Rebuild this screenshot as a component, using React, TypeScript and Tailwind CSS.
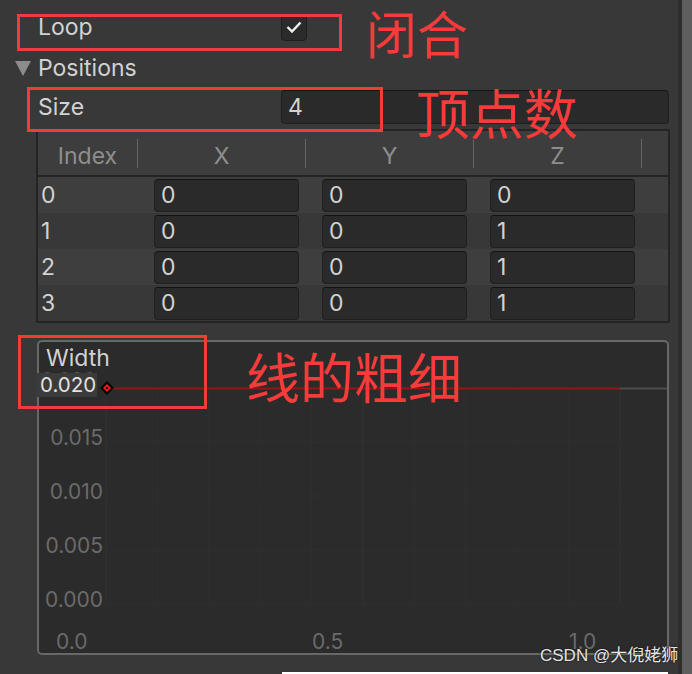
import React from 'react';

const rows = [
    ['0', '0', '0'],
    ['0', '0', '1'],
    ['0', '0', '1'],
    ['0', '0', '1'],
];

const yLabels = [
    { text: '0.015', top: 80 },
    { text: '0.010', top: 134 },
    { text: '0.005', top: 188 },
    { text: '0.000', top: 242 },
];

const xLabels = [
    { text: '0.0', left: 17 },
    { text: '0.5', left: 273 },
    { text: '1.0', left: 530 },
];

function NumberField({ value, className }: { value: string; className?: string }) {
    return (
        <div className={`h-[33px] bg-[#2a2a2a] border border-[#1f1f1f] border-t-[#141414] rounded-[4px] flex items-center pl-[6px] text-[23px] text-[#d2d2d2] ${className ?? ''}`}>
            {value}
        </div>
    );
}

function CurveGrid() {
    const minorX = Array.from({ length: 11 }, (_, i) => 67 + i * 51.4);
    const minorY = [46, 100, 154, 208, 262];
    return (
        <svg className="absolute left-0 top-0" width="628" height="311">
            {minorX.map((x, i) => (
                <line key={'v' + i} x1={x} y1={46} x2={x} y2={262} stroke={i % 5 === 0 ? '#333333' : '#2f2f2f'} strokeWidth="1" />
            ))}
            {minorY.map((y, i) => (
                <line key={'h' + i} x1={67} y1={y} x2={581} y2={y} stroke="#313131" strokeWidth="1" />
            ))}
            <line x1={581} y1={46.5} x2={628} y2={46.5} stroke="#4d4d4d" strokeWidth="2" />
            <line x1={70} y1={46.5} x2={581} y2={46.5} stroke="#9a1414" strokeWidth="2" />
            {/* keyframe */}
            <polygon points="68,39 75,46 68,53 61,46" fill="#050505" />
            <polygon points="68,42 72,46 68,50 64,46" fill="#ff1a1a" />
            <circle cx="68" cy="46" r="1.3" fill="#1a0000" />
        </svg>
    );
}

export default function App() {
    return (
        <div className="relative w-[692px] h-[674px] overflow-hidden bg-[#383838] flex" style={{ fontFamily: 'Inter, "Noto Sans", "Noto Sans CJK SC", sans-serif' }}>
            <div className="w-[678px] flex flex-col pt-[13px]">
                {/* Loop */}
                <div className="h-[28px] flex items-center">
                    <span className="ml-[38px] w-[243px] text-[23px] leading-[28px] text-[#d2d2d2]">Loop</span>
                    <div className="w-[26px] h-[27px] bg-[#2b2b2b] border border-[#1e1e1e] rounded-[4px] flex items-center justify-center">
                        <svg width="16" height="12" viewBox="0 0 16 12">
                            <polyline points="1.5,6 6,10.5 14.5,1.5" fill="none" stroke="#f0f0f0" strokeWidth="2.4" />
                        </svg>
                    </div>
                </div>

                {/* Positions */}
                <div className="mt-[15px] h-[24px] flex items-center">
                    <svg className="ml-[15px]" width="16" height="15" viewBox="0 0 16 15">
                        <polygon points="0,0 16,0 8,15" fill="#8c8c8c" />
                    </svg>
                    <span className="ml-[7px] text-[23px] leading-[28px] text-[#d2d2d2]">Positions</span>
                </div>

                {/* Size */}
                <div className="mt-[10px] h-[34px] flex items-center">
                    <span className="ml-[38px] w-[243px] text-[23px] leading-[28px] text-[#d2d2d2]">Size</span>
                    <div className="w-[388px] h-[34px] bg-[#2a2a2a] border border-[#1f1f1f] border-t-[#141414] rounded-[4px] flex items-center pl-[6px] text-[23px] text-[#d2d2d2]">
                        4
                    </div>
                </div>

                {/* Table */}
                <div className="mt-[5px] ml-[36px] w-[634px] border-2 border-[#242424] flex flex-col">
                    <div className="h-[46px] bg-[#3d3d3d] flex items-center pt-[6px] text-[23px] text-[#8e8e8e] border-b-2 border-[#242424]">
                        <div className="w-[99px] text-center">Index</div>
                        <div className="w-[1px] h-[29px] -mt-[6px] bg-[#656565]" />
                        <div className="w-[167px] text-center">X</div>
                        <div className="w-[1px] h-[29px] -mt-[6px] bg-[#656565]" />
                        <div className="w-[167px] text-center">Y</div>
                        <div className="w-[1px] h-[29px] -mt-[6px] bg-[#656565]" />
                        <div className="w-[167px] text-center">Z</div>
                        <div className="w-[1px] h-[29px] -mt-[6px] bg-[#656565]" />
                    </div>
                    {rows.map((row, i) => (
                        <div key={i} className={`h-[36px] flex items-center ${i % 2 === 0 ? 'bg-[#3e3e3e]' : 'bg-[#383838]'}`}>
                            <div className="w-[116px] pl-[3px] text-[23px] text-[#d2d2d2]">{i}</div>
                            <NumberField value={row[0]} className="w-[145px]" />
                            <div className="w-[23px]" />
                            <NumberField value={row[1]} className="w-[145px]" />
                            <div className="w-[23px]" />
                            <NumberField value={row[2]} className="w-[145px]" />
                        </div>
                    ))}
                </div>

                {/* Width curve */}
                <div className="mt-[17px] ml-[37px] w-[632px] h-[315px] border-2 border-[#686868] rounded-[5px] bg-[#2b2b2b] relative">
                    <CurveGrid />
                    <span className="absolute left-[7px] top-[-1px] text-[23px] text-[#d2d2d2]">Width</span>
                    <span className="absolute left-[2px] top-[23px] text-[20px] text-[#555555]">0.020</span>
                    <div className="absolute left-[-3px] top-[31px] w-[61px] h-[24px] bg-[#3b3b3b] flex items-center pl-[4px] text-[20.5px] text-[#e2e2e2]">
                        0.020
                    </div>
                    {yLabels.map((l) => (
                        <span key={l.text} className="absolute left-[4px] w-[60px] text-right text-[21px] text-[#6a6a6a]" style={{ top: l.top }}>
                            {l.text}
                        </span>
                    ))}
                    {xLabels.map((l) => (
                        <span key={l.text} className="absolute top-[284px] text-[21px] text-[#6a6a6a]" style={{ left: l.left }}>
                            {l.text}
                        </span>
                    ))}
                </div>

                <div className="mt-[17px] ml-[282px] w-[386px] h-[2px] bg-white" />
            </div>
            <div className="w-[4px] bg-[#2e2e2e]" />
            <div className="w-[10px] bg-[#5e5e5e]" />

            {/* annotations */}
            <div className="absolute left-[17px] top-[14px] w-[325px] h-[37px] border-[3px] border-[#f23b3b]" />
            <div className="absolute left-[27px] top-[87px] w-[356px] h-[45px] border-[3px] border-[#f23b3b]" />
            <div className="absolute left-[18px] top-[335px] w-[189px] h-[74px] border-[3px] border-[#f23b3b]" />
            <span className="absolute left-[366px] top-[2px] text-[51px] leading-[60px] text-[#f73b3b]" style={{ fontFamily: '"Noto Sans CJK SC", sans-serif' }}>闭合</span>
            <span className="absolute left-[416px] top-[81px] text-[54px] leading-[62px] text-[#f73b3b]" style={{ fontFamily: '"Noto Sans CJK SC", sans-serif' }}>顶点数</span>
            <span className="absolute left-[246px] top-[345px] text-[54px] leading-[62px] text-[#f73b3b]" style={{ fontFamily: '"Noto Sans CJK SC", sans-serif' }}>线的粗细</span>
            <span className="absolute left-[540px] top-[643px] text-[17px] text-[#e6e6e6] [text-shadow:0_0_2px_#000]" style={{ fontFamily: '"Liberation Sans", "Noto Sans CJK SC", sans-serif' }}>CSDN @大倪姥狮</span>
        </div>
    );
}
